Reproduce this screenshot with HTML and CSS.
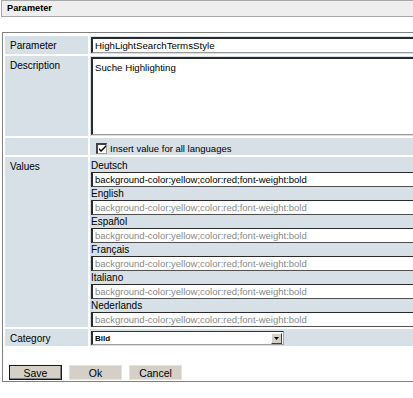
FILE: index.html
```html
<!DOCTYPE html>
<html lang="en">
<head>
    <meta charset="UTF-8">
    <title>Parameter</title>
    <link rel="stylesheet" href="styles.css">
</head>
<body>
    <div class="titlebar">Parameter</div>

    <div class="panel">
        <table class="form-table">
            <tr class="row-param">
                <td class="label">Parameter</td>
                <td class="value"><div class="field">HighLightSearchTermsStyle</div></td>
            </tr>
            <tr class="row-desc">
                <td class="label">Description</td>
                <td class="value"><div class="field area">Suche Highlighting</div></td>
            </tr>
            <tr class="row-check">
                <td class="label"></td>
                <td class="value">
                    <label class="check">
                        <span class="checkbox">
                            <svg width="7" height="7" viewBox="0 0 7 7"><path d="M0 3 L2 5 L7 0 L7 2 L2 7 L0 5 Z" fill="#000"/></svg>
                        </span>
                        Insert value for all languages
                    </label>
                </td>
            </tr>
            <tr class="row-values">
                <td class="label">Values</td>
                <td class="value">
                    <div class="lang">Deutsch</div>
                    <div class="field small">background-color:yellow;color:red;font-weight:bold</div>
                    <div class="lang">English</div>
                    <div class="field small disabled">background-color:yellow;color:red;font-weight:bold</div>
                    <div class="lang">Español</div>
                    <div class="field small disabled">background-color:yellow;color:red;font-weight:bold</div>
                    <div class="lang">Français</div>
                    <div class="field small disabled">background-color:yellow;color:red;font-weight:bold</div>
                    <div class="lang">Italiano</div>
                    <div class="field small disabled">background-color:yellow;color:red;font-weight:bold</div>
                    <div class="lang">Nederlands</div>
                    <div class="field small disabled">background-color:yellow;color:red;font-weight:bold</div>
                </td>
            </tr>
            <tr class="row-cat">
                <td class="label">Category</td>
                <td class="value">
                    <div class="select">
                        <span class="select-text">Bild</span>
                        <span class="select-btn">
                            <svg width="5" height="3" viewBox="0 0 5 3"><path d="M0 0 H5 L2.5 3 Z" fill="#000"/></svg>
                        </span>
                    </div>
                </td>
            </tr>
        </table>

        <div class="buttons">
            <button class="btn btn-default">Save</button>
            <button class="btn">Ok</button>
            <button class="btn">Cancel</button>
        </div>
    </div>
</body>
</html>
```

FILE: styles.css
```css
html {
    overflow: hidden;
}

body {
    margin: 0;
    background: #ffffff;
    font-family: "Liberation Sans", Arial, sans-serif;
    font-size: 10px;
    color: #000000;
}

.titlebar {
    margin-left: 1px;
    height: 15px;
    line-height: 15px;
    padding-left: 5px;
    background: #eeeeee;
    border: 1px solid #a8a8a8;
    border-right: none;
    font-size: 9.2px;
    font-weight: bold;
}

.panel {
    margin: 15px 0 0 2px;
    width: 460px;
    border: 1px solid #808080;
    border-right: none;
    padding: 1px 0 1px 0;
}

.form-table {
    border-spacing: 2px;
    border-collapse: separate;
}

.form-table td {
    box-sizing: border-box;
    background: #d6e0e6;
    vertical-align: top;
    padding: 0;
}

.form-table td.label {
    width: 83px;
    padding: 4px 0 0 5px;
}

.form-table td.value {
    width: 360px;
    padding-left: 1px;
}

.row-param td {
    height: 18px;
}

.field {
    box-sizing: border-box;
    width: 340px;
    height: 16px;
    margin-top: 1px;
    background: #ffffff;
    border: 1px solid #9a9a9a;
    border-top: 2px solid #2a2a2a;
    border-left: 2px solid #2a2a2a;
    padding: 1px 0 0 2px;
    font-size: 9.7px;
    line-height: 12px;
    white-space: nowrap;
    overflow: hidden;
}

.row-desc td {
    height: 80px;
}

.field.area {
    height: 78px;
    padding-top: 3px;
}

.row-check td {
    height: 17px;
}

.check {
    display: flex;
    align-items: center;
    gap: 3px;
    padding: 3px 0 0 5px;
    height: 14px;
    font-size: 9.5px;
}

.checkbox {
    box-sizing: border-box;
    width: 11px;
    height: 11px;
    background: #ffffff;
    border: 1px solid #a0a0a0;
    border-top: 2px solid #404040;
    border-left: 2px solid #404040;
    display: flex;
    align-items: center;
    justify-content: center;
}

.row-values td {
    height: 170px;
}

.form-table .row-values td.value {
    padding-top: 2px;
}

.lang {
    height: 13px;
    line-height: 13px;
    font-size: 10px;
}

.field.small {
    height: 15px;
    margin-top: 0;
    border-top-width: 1px;
    border-bottom-color: #505050;
    padding-top: 1px;
    font-size: 9.5px;
}

.field.disabled {
    color: #8a8a8a;
}

.row-cat td {
    height: 17px;
}

.select {
    box-sizing: border-box;
    display: flex;
    align-items: center;
    justify-content: space-between;
    width: 193px;
    height: 14px;
    margin-top: 2px;
    background: #ffffff;
    border: 1px solid #a0a0a0;
    border-top: 1px solid #303030;
    border-left: 2px solid #303030;
}

.select-text {
    padding-left: 2px;
    font-size: 8px;
    font-weight: bold;
}

.select-btn {
    box-sizing: border-box;
    width: 11px;
    height: 11px;
    margin-right: 1px;
    background: #d4d0c8;
    border: 1px solid #ffffff;
    border-right-color: #404040;
    border-bottom-color: #404040;
    display: flex;
    align-items: center;
    justify-content: center;
}

.buttons {
    display: flex;
    gap: 7px;
    padding: 17px 0 0 6px;
}

.btn {
    box-sizing: border-box;
    width: 53px;
    height: 15px;
    padding: 0;
    background: #d4d0c8;
    border: 1px solid #e4e2dc;
    font-family: "Liberation Sans", Arial, sans-serif;
    font-size: 10.5px;
    line-height: 12px;
    color: #000000;
}

.btn-default {
    border: 1px solid #1a1a1a;
    box-shadow: inset -1px -1px 0 #808080;
}
```
